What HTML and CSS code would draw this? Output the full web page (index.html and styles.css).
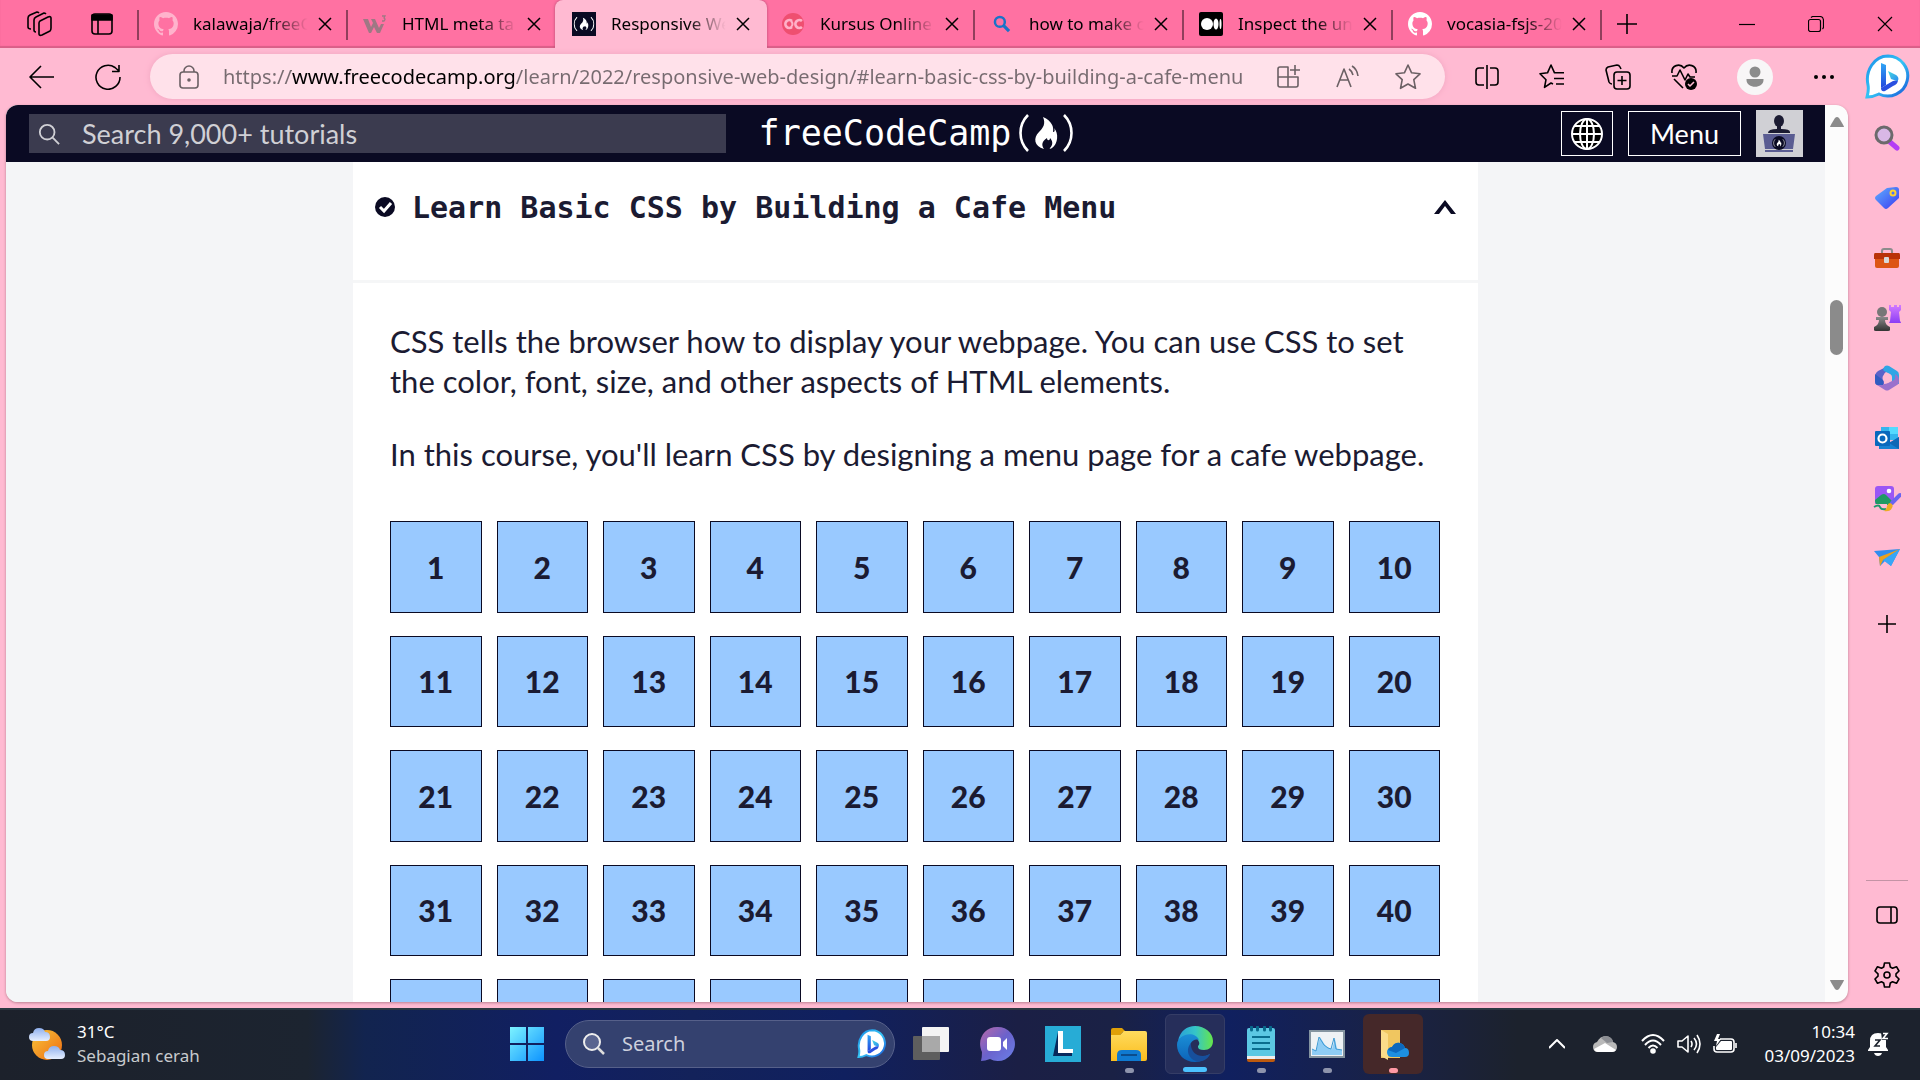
FILE: index.html
```html
<!DOCTYPE html>
<html lang="en">
<head>
<meta charset="utf-8">
<title>Responsive Web Design</title>
<link rel="stylesheet" href="styles.css">
</head>
<body>
<svg class="defs" aria-hidden="true">
  <defs>
    <linearGradient id="bingRing" x1="0" y1="0" x2="1" y2="1"><stop offset="0" stop-color="#1a8fe8"/><stop offset=".5" stop-color="#35c4f5"/><stop offset="1" stop-color="#1756d8"/></linearGradient>
    <linearGradient id="bingB" x1="0" y1="0" x2="0" y2="1"><stop offset="0" stop-color="#2fa6f5"/><stop offset="1" stop-color="#2347dd"/></linearGradient>
    <linearGradient id="bingTip" x1="0" y1="0" x2="1" y2="1"><stop offset="0" stop-color="#46d8e0"/><stop offset="1" stop-color="#2a8df0"/></linearGradient>
    <linearGradient id="tagFill" x1="0" y1="0" x2="1" y2="1"><stop offset="0" stop-color="#5fb0ff"/><stop offset="1" stop-color="#3a3af0"/></linearGradient>
    <linearGradient id="violet" x1="0" y1="0" x2="0" y2="1"><stop offset="0" stop-color="#d27bff"/><stop offset="1" stop-color="#8b3df5"/></linearGradient>
    <linearGradient id="pawn" x1="0" y1="0" x2="0" y2="1"><stop offset="0" stop-color="#8a8a8a"/><stop offset="1" stop-color="#333"/></linearGradient>
    <linearGradient id="win" x1="0" y1="0" x2="1" y2="1"><stop offset="0" stop-color="#7df3ff"/><stop offset="1" stop-color="#0d93ff"/></linearGradient>
    <linearGradient id="sun" x1="0" y1="0" x2="1" y2="1"><stop offset="0" stop-color="#f8c63a"/><stop offset="1" stop-color="#ee6a12"/></linearGradient>
    <linearGradient id="cloud" x1="0" y1="0" x2="0" y2="1"><stop offset="0" stop-color="#8fb0ee"/><stop offset="1" stop-color="#e6efff"/></linearGradient>
    <linearGradient id="teams" x1="0" y1="0" x2="1" y2="1"><stop offset="0" stop-color="#b968a8"/><stop offset=".5" stop-color="#6a62cc"/><stop offset="1" stop-color="#6a80e8"/></linearGradient>
    <linearGradient id="folder" x1="0" y1="0" x2="0" y2="1"><stop offset="0" stop-color="#ffdb5e"/><stop offset="1" stop-color="#fbbd1d"/></linearGradient>
    <linearGradient id="edgeTop" x1="0" y1="0" x2="1" y2="0"><stop offset="0" stop-color="#2a9fd8"/><stop offset=".5" stop-color="#35c5c8"/><stop offset="1" stop-color="#66e64a"/></linearGradient>
    <linearGradient id="edgeLow" x1="0" y1="0" x2="0" y2="1"><stop offset="0" stop-color="#1b8fd6"/><stop offset="1" stop-color="#0c62b8"/></linearGradient>
    <symbol id="close" viewBox="0 0 14 14"><path d="M1 1l12 12M13 1L1 13" fill="none" stroke="currentColor" stroke-width="1.5"/></symbol>
    <symbol id="github" viewBox="0 0 16 16"><path fill="currentColor" d="M8 0C3.58 0 0 3.58 0 8c0 3.54 2.29 6.53 5.47 7.59.4.07.55-.17.55-.38 0-.19-.01-.82-.01-1.49-2.01.37-2.53-.49-2.69-.94-.09-.23-.48-.94-.82-1.13-.28-.15-.68-.52-.01-.53.63-.01 1.08.58 1.23.82.72 1.21 1.87.87 2.33.66.07-.52.28-.87.51-1.07-1.78-.2-3.64-.89-3.64-3.95 0-.87.31-1.59.82-2.15-.08-.2-.36-1.02.08-2.12 0 0 .67-.21 2.2.82.64-.18 1.32-.27 2-.27s1.36.09 2 .27c1.53-1.04 2.2-.82 2.2-.82.44 1.1.16 1.92.08 2.12.51.56.82 1.27.82 2.15 0 3.07-1.87 3.75-3.65 3.95.29.25.54.73.54 1.48 0 1.07-.01 1.93-.01 2.2 0 .21.15.46.55.38A8.01 8.01 0 0 0 16 8c0-4.42-3.58-8-8-8z"/></symbol>
    <symbol id="flame" viewBox="0 0 54 38"><path d="M9 1C-1 11-1 27 9 37M45 1c10 10 10 26 0 36" fill="none" stroke="currentColor" stroke-width="2.6"/><path fill="currentColor" d="M24 3c9 4 11 10 10 15 2 0 2-2 1-4 5 5 4 16-2 20-1 1-3 1-2 0 3-3 3-7 0-10 0 3-3 3-3 0-5 3-6 7-3 11-10-3-11-11-5-17 4-4 7-8 4-15z"/></symbol>
    <symbol id="bing" viewBox="0 0 44 46"><path d="M23 2a20 20 0 1 1-9 38c-4 2-8 3-12 3 1-4 2-7 1-12-3-14 6-29 20-29z" fill="#fff" stroke="url(#bingRing)" stroke-width="3"/><path d="M16 9l5 2v20l-5 3z" fill="url(#bingB)"/><path d="M16 34l5-3 7-4 5-1c0 3-2 5-5 6l-8 5c-3 1-4-1-4-3z" fill="#2a4fe0"/><path d="M23 17l8 4c3 2 3 5 1 6l-6-2z" fill="url(#bingTip)"/></symbol>
    <symbol id="lens" viewBox="0 0 24 24"><circle cx="10" cy="10" r="8" fill="none" stroke="currentColor" stroke-width="2"/><path d="M16 16l7 7" stroke="currentColor" stroke-width="2"/></symbol>
  </defs>
</svg>

<div class="browser">
  <nav class="tabs" aria-label="Tabs">
    <div class="tab-tools">
      <button class="plain" aria-label="Workspaces"><svg width="26" height="26" viewBox="0 0 26 26" class="line"><path d="M12 12q0-1 1-2l8-4q3-1 3 1v10q0 2-1 3l-8 4q-3 1-3-1z"/><path d="M9 21q-2 0-2-2V9q0-2 2-3l8-4q1 0 2 1M4 18q-3 0-3-2V7q0-2 2-3l7-3q1 0 2 1"/></svg></button>
      <button class="plain" aria-label="Tab actions"><svg width="22" height="22" viewBox="0 0 22 22" class="line"><rect x="1" y="1" width="20" height="20" rx="3"/><path d="M1 2h20v5H1z" fill="currentColor"/><path d="M7 6v15"/></svg></button>
    </div>
    <div class="tab divided">
      <svg class="fav faded" width="24" height="24"><use href="#github"/></svg>
      <a href="#" class="tab-name">kalawaja/freeC</a>
      <button class="plain close" aria-label="Close tab"><svg width="14" height="14"><use href="#close"/></svg></button>
    </div>
    <div class="tab divided">
      <svg class="fav" width="24" height="24" viewBox="0 0 24 24"><path d="M0 7h5l3 8 2-4-2-4h4l4 9 2-4h3l-4 9h-3l-3-6-3 6H6z" fill="#9f7884"/><path d="M19 4h3l-1 2q2 1 0 3h-2" fill="none" stroke="#9f7884" stroke-width="1.3"/></svg>
      <a href="#" class="tab-name">HTML meta ta</a>
      <button class="plain close" aria-label="Close tab"><svg width="14" height="14"><use href="#close"/></svg></button>
    </div>
    <div class="tab active">
      <svg class="fav dark" width="24" height="24" viewBox="-4 -10 62 58"><use href="#flame" width="54" height="38"/></svg>
      <a href="#" class="tab-name">Responsive We</a>
      <button class="plain close" aria-label="Close tab"><svg width="14" height="14"><use href="#close"/></svg></button>
    </div>
    <div class="tab">
      <svg class="fav" width="24" height="24" viewBox="0 0 24 24"><circle cx="12" cy="12" r="11" fill="#ef4f70"/><path d="M11 9a4 4 0 1 0 0 6M21 9a4 4 0 1 0 0 6" fill="none" stroke="#ffb0c8" stroke-width="2.6"/><path d="M10 9q3 3 0 6" fill="none" stroke="#ffb0c8" stroke-width="2"/></svg>
      <a href="#" class="tab-name">Kursus Online</a>
      <button class="plain close" aria-label="Close tab"><svg width="14" height="14"><use href="#close"/></svg></button>
    </div>
    <div class="tab divided">
      <svg class="fav blue" width="24" height="24" viewBox="-5 -5 34 34"><circle cx="9" cy="9" r="7" fill="none" stroke="currentColor" stroke-width="3.5"/><path d="M14 14l8 8" stroke="currentColor" stroke-width="4.5"/></svg>
      <a href="#" class="tab-name">how to make c</a>
      <button class="plain close" aria-label="Close tab"><svg width="14" height="14"><use href="#close"/></svg></button>
    </div>
    <div class="tab divided">
      <svg class="fav" width="24" height="24" viewBox="0 0 24 24"><rect width="24" height="24" rx="2"/><circle cx="8" cy="12" r="6" fill="#fff"/><ellipse cx="17" cy="12" rx="2.5" ry="5.5" fill="#fff"/><ellipse cx="21.5" cy="12" rx="1" ry="5" fill="#fff"/></svg>
      <a href="#" class="tab-name">Inspect the un</a>
      <button class="plain close" aria-label="Close tab"><svg width="14" height="14"><use href="#close"/></svg></button>
    </div>
    <div class="tab divided">
      <svg class="fav white" width="24" height="24"><use href="#github"/></svg>
      <a href="#" class="tab-name">vocasia-fsjs-20</a>
      <button class="plain close" aria-label="Close tab"><svg width="14" height="14"><use href="#close"/></svg></button>
    </div>
    <div class="tab-new divided"><button class="plain" aria-label="New tab"><svg width="20" height="20" viewBox="0 0 20 20" class="line"><path d="M10 0v20M0 10h20"/></svg></button></div>
    <div class="window-buttons">
      <button class="plain" aria-label="Minimize"><svg width="16" height="16" viewBox="0 0 16 16" class="line thin"><path d="M0 8.5h16"/></svg></button>
      <button class="plain" aria-label="Restore"><svg width="16" height="16" viewBox="0 0 16 16" class="line thin"><rect x=".5" y="3.5" width="12" height="12" rx="2"/><path d="M3 1.5q1-1 2-1h7q3 0 3.500 3.500v7q0 1-1 2"/></svg></button>
      <button class="plain" aria-label="Close window"><svg width="16" height="16" viewBox="0 0 16 16" class="line thin"><path d="M1 1l14 14M15 1L1 15"/></svg></button>
    </div>
  </nav>

  <div class="toolbar">
    <div class="nav-buttons">
      <button class="plain" aria-label="Back"><svg width="26" height="24" viewBox="0 0 26 24" class="line"><path d="M12 1L1 12l11 11M1 12h24"/></svg></button>
      <button class="plain" aria-label="Refresh"><svg width="26" height="26" viewBox="0 0 26 26" class="line"><path d="M25 13A12 12 0 1 1 20 3.500L24 7M24 1v6.500h-7"/></svg></button>
    </div>
    <form class="address">
      <svg width="20" height="24" viewBox="0 0 20 24" class="line"><rect x="1" y="7" width="18" height="16" rx="3"/><path d="M5 7V6a5 5 0 0 1 10 0v1"/><circle cx="10" cy="15" r="1" fill="currentColor"/></svg>
      <input type="text" class="url" aria-label="Address" value="https://www.freecodecamp.org/learn/2022/responsive-web-design/#learn-basic-css-by-building-a-cafe-menu">
      <div class="address-tools">
        <button type="button" class="plain" aria-label="Apps"><svg width="24" height="24" viewBox="0 0 24 24" class="line"><path d="M11 12H1V4q0-2 2-2h8v20H3q-2 0-2-2v-8M11 12h10v8q0 2-2 2h-8M18 0v10M13 5h10"/></svg></button>
        <button type="button" class="plain" aria-label="Read aloud"><svg width="24" height="24" viewBox="0 0 24 24" class="line"><path d="M1 22L8 4l7 18M4 15h8M13 4q3 2 4 6M16 1q5 3 6 10"/></svg></button>
        <button type="button" class="plain" aria-label="Add to favorites"><svg width="26" height="26" viewBox="0 0 26 26" class="line"><path d="M13 1l3.600 7.800 8.400 1-6.200 5.900 1.700 8.600L13 20l-7.500 4.300 1.700-8.600L1 9.800l8.400-1z"/></svg></button>
      </div>
    </form>
    <div class="toolbar-tools">
      <button class="plain" aria-label="Split screen"><svg width="24" height="26" viewBox="0 0 24 26" class="line"><path d="M9 4H4Q1 4 1 7v11q0 3 3 3h5M15 4h5q3 0 3 3v11q0 3-3 3h-5M12 1v24"/></svg></button>
      <button class="plain" aria-label="Favorites"><svg width="26" height="26" viewBox="0 0 26 26" class="line"><path d="M14 20l-2-1-6.500 4.300L7 15.700 1 9.800l7.500-1L12 1l3.500 7.800H25M15 14.500h10M17 20h8"/></svg></button>
      <button class="plain" aria-label="Collections"><svg width="26" height="26" viewBox="0 0 26 26" class="line"><rect x="9" y="8" width="16" height="17" rx="3"/><path d="M17 12v9M12.500 16.500h9M7 20q-2 0-3-2L1 6q0-2 2-3l9-2q2 0 3 2l1 2"/></svg></button>
      <button class="plain" aria-label="Browser essentials"><svg width="26" height="26" viewBox="0 0 26 26" class="line"><path d="M1 9C0 1 9-1 13 4c4-5 13-3 12 5M3 15l9 9M1 12h5l3-6 5 10 3-6 2 3h5"/><circle cx="20" cy="20" r="6" fill="#000" stroke="none"/><path d="M17 20l2 2 4-4" stroke="#ffbad2"/></svg></button>
      <button class="plain" aria-label="Profile"><svg width="36" height="36" viewBox="0 0 36 36"><circle cx="18" cy="18" r="18" fill="#f8f6f7"/><circle cx="18" cy="13" r="5.500" fill="#8c8c8c"/><path d="M9.500 20h17v1c0 9-17 9-17 0z" fill="#8c8c8c"/></svg></button>
      <button class="plain" aria-label="Settings and more"><svg width="22" height="6" viewBox="0 0 22 6"><circle cx="3" cy="3" r="2"/><circle cx="11" cy="3" r="2"/><circle cx="19" cy="3" r="2"/></svg></button>
    </div>
    <button class="plain bing-button" aria-label="Bing chat"><svg width="46" height="46"><use href="#bing"/></svg></button>
  </div>

  <div class="workspace">
    <div class="page">
      <div class="page-body">
        <header class="site-header">
          <form class="site-search">
            <svg width="22" height="22"><use href="#lens"/></svg>
            <input type="search" placeholder="Search 9,000+ tutorials" aria-label="Search tutorials">
          </form>
          <a href="#" class="logo">freeCodeCamp<svg width="54" height="38"><use href="#flame"/></svg></a>
          <div class="site-actions">
            <button class="outlined globe" aria-label="Language"><svg width="32" height="32" viewBox="0 0 32 32" fill="none" stroke="#fff" stroke-width="2"><circle cx="16" cy="16" r="15" fill="#000"/><ellipse cx="16" cy="16" rx="7" ry="15"/><path d="M16 1v30M1 16h30M4 8h24M4 24h24"/></svg></button>
            <button class="outlined">Menu</button>
            <a href="#" class="avatar" aria-label="Profile"><svg width="47" height="47" viewBox="0 0 47 47"><path fill="#d0d0d5" d="M0 0h47v47H0z"/><ellipse cx="23" cy="11" rx="5" ry="6" fill="#1b1b32"/><path d="M21 15h4v4q10 0 9 4H12q0-4 9-4z" fill="#1b1b32"/><path fill="#5a5c92" d="M7 24h32l-2 15H9zM9 40h28v2H9z"/><circle cx="23" cy="33" r="7" fill="#0a0a23"/><svg x="17" y="29" width="12" height="8" color="#fff"><use href="#flame"/></svg></svg></a>
          </div>
        </header>
        <main class="course">
          <button class="course-title">
            <svg width="20" height="20" viewBox="0 0 20 20"><circle cx="10" cy="10" r="10" fill="#0a0a23"/><path d="M5 10l4 4 7-8" fill="none" stroke="#fff" stroke-width="3"/></svg>
            <span>Learn Basic CSS by Building a Cafe Menu</span>
            <svg width="22" height="14" viewBox="0 0 22 14"><path d="M0 14L11 0l11 14h-5L11 6l-6 8z" fill="#0a0a23"/></svg>
          </button>
          <section class="course-body">
            <p>CSS tells the browser how to display your webpage. You can use CSS to set the color, font, size, and other aspects of HTML elements.</p>
            <p>In this course, you'll learn CSS by designing a menu page for a cafe webpage.</p>
            <div class="steps">
              <a href="#">1</a><a href="#">2</a><a href="#">3</a><a href="#">4</a><a href="#">5</a><a href="#">6</a><a href="#">7</a><a href="#">8</a><a href="#">9</a><a href="#">10</a>
              <a href="#">11</a><a href="#">12</a><a href="#">13</a><a href="#">14</a><a href="#">15</a><a href="#">16</a><a href="#">17</a><a href="#">18</a><a href="#">19</a><a href="#">20</a>
              <a href="#">21</a><a href="#">22</a><a href="#">23</a><a href="#">24</a><a href="#">25</a><a href="#">26</a><a href="#">27</a><a href="#">28</a><a href="#">29</a><a href="#">30</a>
              <a href="#">31</a><a href="#">32</a><a href="#">33</a><a href="#">34</a><a href="#">35</a><a href="#">36</a><a href="#">37</a><a href="#">38</a><a href="#">39</a><a href="#">40</a>
              <a href="#" aria-label="Step 41"></a><a href="#" aria-label="Step 42"></a><a href="#" aria-label="Step 43"></a><a href="#" aria-label="Step 44"></a><a href="#" aria-label="Step 45"></a><a href="#" aria-label="Step 46"></a><a href="#" aria-label="Step 47"></a><a href="#" aria-label="Step 48"></a><a href="#" aria-label="Step 49"></a><a href="#" aria-label="Step 50"></a>
            </div>
          </section>
        </main>
      </div>
      <div class="scrollbar" aria-hidden="true">
        <svg width="14" height="10" viewBox="0 0 14 10"><path d="M0 10q0-1 5-9 2-2 4 0 5 8 5 9z" fill="#8b8b8b"/></svg>
        <div class="track"><div class="thumb"></div></div>
        <svg width="14" height="10" viewBox="0 0 14 10"><path d="M0 0q0 1 5 9 2 2 4 0 5-8 5-9z" fill="#8b8b8b"/></svg>
      </div>
    </div>

    <aside class="sidebar">
      <button class="plain" aria-label="Search"><svg width="26" height="26" viewBox="0 0 26 26"><path d="M16 17l7 6" stroke="#b43cf5" stroke-width="5" stroke-linecap="round"/><circle cx="10" cy="10" r="8" fill="#d9b8e6" stroke="#6c6a6c" stroke-width="3"/></svg></button>
      <button class="plain" aria-label="Shopping"><svg width="26" height="26" viewBox="0 0 26 26"><path d="M13 3l9-1q3 0 3 3v8L14 23q-2 2-4 0l-8-8q-2-2 0-4z" fill="url(#tagFill)"/><circle cx="19" cy="8" r="2.500" fill="none" stroke="#ffd12e" stroke-width="2"/></svg></button>
      <button class="plain" aria-label="Tools"><svg width="28" height="26" viewBox="0 0 28 26"><path d="M9 8V6q0-2 2-2h6q2 0 2 2v2" fill="none" stroke="#8c8c8c" stroke-width="2"/><path d="M2 10h24v11q0 2-2 2H4q-2 0-2-2z" fill="#dd5514"/><path d="M2 8h24q1 0 1 2v4H1v-4q0-2 1-2z" fill="#b93208"/><rect x="11" y="12" width="5" height="6" rx="1" fill="#d8d8d8"/></svg></button>
      <button class="plain" aria-label="Games"><svg width="28" height="28" viewBox="0 0 28 28"><path d="M16 1h2v2h3V1h3v2h2V1h2v5l-2 2 1 9q1 1 1 2H16l1-2 1-9-2-2z" fill="url(#violet)"/><circle cx="9" cy="8" r="5" fill="#777"/><path d="M3 13h12v3h-3q0 5 5 7v3q0 1-2 1H3q-2 0-2-1v-3q5-2 5-7H3z" fill="url(#pawn)"/></svg></button>
      <button class="plain" aria-label="Microsoft 365"><svg width="26" height="26" viewBox="0 0 26 26"><path d="M14 1L4 6Q1 8 1 11v6q0 2 2 3l7 2V10q0-2 2-3l6-3z" fill="#5a63c8"/><path d="M11 1q2-1 4 0l8 5q2 1 2 4v9l-7-1v-6q0-2-2-3l-6-3q-2-2 1-5z" fill="#2fa5e5"/><path d="M25 16q0 3-2 4l-8 5q-2 1-4 0l-8-5 7-1q2 0 4-1l6-3q2-1 1-6 4 2 4 7z" fill="#9a70cc"/><path d="M3 20q-2-1-2-4V9l8 6v5z" fill="#315cc0"/><circle cx="13" cy="13" r="4.500" fill="#ffbad2"/></svg></button>
      <button class="plain" aria-label="Outlook"><svg width="26" height="26" viewBox="0 0 26 26"><path d="M7 2h17v13H7z" fill="#34b5ee"/><path d="M15 2h9v7h-9z" fill="#54daff"/><path d="M5 24V14h3l9 3 8-5v12z" fill="#1681d2"/><path d="M25 12v12L15 18z" fill="#1067b5"/><rect x="1" y="6" width="15" height="15" rx="1" fill="#0869bd"/><circle cx="8.500" cy="13.500" r="4" fill="none" stroke="#fff" stroke-width="2.200"/></svg></button>
      <button class="plain" aria-label="Image creator"><svg width="28" height="28" viewBox="0 0 28 28"><rect x="2" y="2" width="19" height="19" rx="3" fill="#9a56f5"/><circle cx="16" cy="7" r="2.300" fill="#fff"/><path d="M2 16l6-5q3-2 5 0l6 6q-1 4-4 4H5q-3 0-3-5z" fill="#1f9a63"/><path d="M0 20h14v8H0z" fill="#ffbad2"/><path d="M1 23q5-3 6 0t6 2" fill="none" stroke="#1c9a6c" stroke-width="2"/><path d="M19 19l8-8" stroke="#6a64f0" stroke-width="4" stroke-linecap="round"/><path d="M17 19q4 1 2 5-2 4-8 3 3-2 3-5 1-3 3-3z" fill="#ecab22"/></svg></button>
      <button class="plain" aria-label="Drop"><svg width="28" height="20" viewBox="0 0 28 20"><path d="M1 3L27 1 18 18l-6-5-5 5-1-9z" fill="#2f8df0"/><path d="M27 1L6 9l1 9 3-6z" fill="#eaa11e"/><path d="M27 1L10 12l8 6z" fill="#38a6f6"/></svg></button>
      <div class="sidebar-add"><button class="plain" aria-label="Customize sidebar"><svg width="18" height="18" viewBox="0 0 18 18" class="line"><path d="M9 0v18M0 9h18"/></svg></button></div>
      <div class="sidebar-end">
        <button class="plain" aria-label="Hide sidebar"><svg width="22" height="18" viewBox="0 0 22 18" class="line"><rect x="1" y="1" width="20" height="16" rx="3"/><path d="M15 1v16"/></svg></button>
        <button class="plain" aria-label="Settings"><svg width="26" height="26" viewBox="0 0 26 26" class="line"><path d="M10.500 1h5l.8 4 2.200 1.200 4-1.500 2.500 4.300L22 11.800v2.400l3 2.800-2.500 4.300-4-1.500-2.200 1.200-.8 4h-5l-.8-4-2.200-1.200-4 1.500L1 17l3-2.800v-2.400L1 9l2.500-4.300 4 1.500L9.700 5z"/><circle cx="13" cy="13" r="3"/></svg></button>
      </div>
    </aside>
  </div>
</div>

<footer class="taskbar">
  <a href="#" class="weather">
    <svg width="36" height="36" viewBox="0 0 36 36"><circle cx="18" cy="19" r="15" fill="url(#sun)"/><path d="M4 15q-4 0-4-4t4-4q1-5 6-5t6 4q5 0 5 5 0 4-4 4z" fill="url(#cloud)"/><path d="M19 33q-4 0-4-4t4-4q1-5 6-5t6 4q5 0 5 5 0 4-4 4z" fill="url(#cloud)"/></svg>
    <span>31°C<br><small>Sebagian cerah</small></span>
  </a>
  <div class="apps">
    <button class="app" aria-label="Start"><svg width="36" height="36" viewBox="0 0 36 36"><path d="M1 1h16v16H1zM19 1h16v16H19zM1 19h16v16H1zM19 19h16v16H19z" fill="url(#win)"/></svg></button>
    <form class="task-search">
      <svg width="22" height="22" viewBox="0 0 22 22"><circle cx="9" cy="9" r="8" fill="#59648f" stroke="#eee" stroke-width="2"/><path d="M15 15l6 6" stroke="#ddd" stroke-width="2.500"/></svg>
      <input type="search" placeholder="Search" aria-label="Search Windows">
      <svg width="29" height="30"><use href="#bing"/></svg>
    </form>
    <button class="app" aria-label="Task view"><svg width="36" height="36" viewBox="0 0 36 36"><rect x="9" y="1" width="27" height="25" rx="1" fill="#f4f4f4"/><rect y="10" width="27" height="24" rx="1" fill="#5e5e5e"/><path d="M9 10h18v16H9z" fill="#a9a9a9"/></svg></button>
    <button class="app" aria-label="Chat"><svg width="36" height="36" viewBox="0 0 36 36"><path d="M18 1a17 17 0 1 1-7 32q-5 2-9 2 1-4 1-9C-3 13 6 1 18 1z" fill="url(#teams)"/><rect x="8" y="11" width="14" height="14" rx="3" fill="#fff"/><path d="M24 16l4-4v12l-4-4z" fill="#fff"/></svg></button>
    <button class="app" aria-label="Lightshot"><svg width="36" height="36" viewBox="0 0 36 36"><path d="M0 0h36v36H0z" fill="#27acd6"/><path d="M13 6L8 30h19v-3H14z" fill="#08295c"/><path d="M13 5h5v18h10v4H13z" fill="#fff"/></svg></button>
    <button class="app open" aria-label="File Explorer"><svg width="36" height="36" viewBox="0 0 36 36"><path d="M0 4q0-2 2-2h9l4 4h-3l-3 3H0z" fill="#e0a008"/><path d="M0 9h9l4-4h21q2 0 2 2v26q0 2-2 2H0z" fill="url(#folder)"/><path d="M6 35v-6q0-5 5-5h14q5 0 5 5v6z" fill="#0f7ad1"/><path d="M10 29h16" stroke="#0b4c8c" stroke-width="2"/></svg></button>
    <button class="app open current" aria-label="Microsoft Edge"><svg width="36" height="36" viewBox="0 0 36 36"><path d="M1 15C3 5 10 0 18 0c10 0 18 7 18 15 0 6-4 9-9 9-4 0-6-1-6-3s2-2 1-5c-3-9-17-8-21-1z" fill="url(#edgeTop)"/><path d="M0 19C0 8 18 4 22 14c-6-2-11 4-8 10 3 7 11 9 19 4-3 5-9 8-15 8C7 36 0 28 0 19z" fill="url(#edgeLow)"/><path d="M14 17c-8 9 1 21 11 18 4-1 7-4 8-7-9 5-20 0-19-11z" fill="#174f9c"/></svg></button>
    <button class="app open" aria-label="Notepad"><svg width="28" height="36" viewBox="0 0 28 36"><rect y="2" width="28" height="32" rx="2" fill="#5cc8e3"/><path d="M0 30h28v4H0z" fill="#eee"/><path d="M0 33h28v1q0 2-2 2H2q-2 0-2-2z" fill="#bd5a0e"/><path d="M5 11h18M5 17h18M5 23h18" stroke="#0a6d8e" stroke-width="2"/><path d="M4.500 1v3M10.500 1v3M17.500 1v3M23.500 1v3" stroke="#08688a" stroke-width="3" stroke-linecap="round"/></svg></button>
    <button class="app open" aria-label="Task Manager"><svg width="36" height="28" viewBox="0 0 36 28"><rect x="1" y="1" width="34" height="26" fill="#eef2f5" stroke="#8494a0" stroke-width="2"/><path d="M3 25v-6l4 2 4-14 5 8 4 3 3 1 3-10 2 10 5 1v5z" fill="#8fcdf5"/><path d="M3 19l4 2 3-14 5 8 4 3 3 1 3-11 2 11 6 1" fill="none" stroke="#3d9ad4"/></svg></button>
    <button class="app open alert" aria-label="OneDrive"><svg width="36" height="36" viewBox="0 0 36 36"><path d="M6 4h19v28H6z" fill="#f0c660"/><path d="M6 4l7 4v26l-7-4z" fill="#fbdc8a"/><path d="M17 31q-5 0-5-5 0-4 5-5 3-5 8-4 4 1 5 5 4 0 4 5 0 4-4 4z" fill="#1d8fe0"/><path d="M13 24q1-3 4-3 3-5 8-4 4 1 5 5l-9 5z" fill="#0c68bd"/></svg></button>
  </div>
  <div class="tray">
    <button class="plain" aria-label="Hidden icons"><svg width="16" height="10" viewBox="0 0 16 10" class="line"><path d="M0 9l8-8 8 8" stroke-width="2"/></svg></button>
    <svg class="drive" width="24" height="16" viewBox="0 0 24 16"><path d="M5 16q-5 0-5-5 0-4 4-5Q7 0 13 0q6 1 7 6 4 1 4 5t-4 5z" fill="#b9b9b9"/><path d="M1 13l11-6 11 7q-1 2-4 2H5q-3 0-4-3z" fill="#fff"/><path d="M8 2q5-4 10 0 2 2 2 4l-6 1z" fill="#8b8d92"/></svg>
    <button class="plain system" aria-label="Network, sound and battery">
      <svg width="24" height="20" viewBox="0 0 24 20" class="line"><path d="M1 7Q12-5 23 7M4 11q8-9 16 0M7.500 14q4.500-5 9 0" stroke-width="2"/><circle cx="12" cy="17" r="2" fill="#fff"/></svg>
      <svg width="24" height="20" viewBox="0 0 24 20" class="line"><path d="M1 7h4l6-5v16l-6-5H1zM14 7q2 3 0 6M17 4q5 6 0 12M20 1q6 9 0 18" stroke-width="1.600"/></svg>
      <svg width="24" height="20" viewBox="0 0 24 20" class="line"><path d="M7 5h11q3 0 3 3v7q0 3-3 3H4q-3 0-3-3v-3M23 9v5"/><path d="M8 7h10q1 0 1 1v7q0 1-1 1H4q-1 0-1-1v-2z" fill="#fff" stroke="none"/><path d="M4 0L1 7h3l-1 5 5-7H5l2-5z" fill="#fff" stroke="none"/></svg>
    </button>
    <time class="clock">10:34<br>03/09/2023</time>
    <button class="plain" aria-label="Notifications"><svg width="21" height="24" viewBox="0 0 21 24"><path d="M0 19v-1l2-3V9q0-8 8-8 8 0 8 8v6l2 3v1z" fill="#fff"/><path d="M6 21h8q-1 3-4 3t-4-3z" fill="#fff"/><path d="M7 8h5l-5 6h5" fill="none" stroke="#1c222d" stroke-width="1.600"/><path d="M13 0h8v8h-7z" fill="#1c222d"/><path d="M15 1.500h4l-4 5h5" fill="none" stroke="#fff" stroke-width="1.600"/></svg></button>
  </div>
</footer>
</body>
</html>
```
FILE: styles.css
```css
* { box-sizing: border-box; }

body {
  margin: 0;
  height: 100vh;
  display: flex;
  flex-direction: column;
  overflow: hidden;
  background: #ffbad2;
  color: #000;
  font-family: "Noto Sans", "Open Sans", sans-serif;
}

a { color: inherit; text-decoration: none; }
svg { display: block; flex: none; }
.defs { position: absolute; width: 0; height: 0; }
button, input { font: inherit; color: inherit; }
input { border: 0; background: none; padding: 0; min-width: 0; outline: 0; }

.plain {
  display: flex;
  align-items: center;
  justify-content: center;
  border: 0;
  padding: 0;
  background: none;
}

.line { fill: none; stroke: currentColor; stroke-width: 1.6; stroke-linejoin: round; }
.line.thin { stroke-width: 1.2; }

/* Browser window */
.browser { flex: 1; min-height: 0; display: flex; flex-direction: column; }

.tabs {
  display: flex;
  height: 48px;
  flex: none;
  background: #ff71a2;
  box-shadow: inset 0 -2px 1px #d95f88;
}
.tab-tools { display: flex; align-items: center; gap: 38px; width: 137px; padding-left: 27px; }
.tab {
  display: flex;
  align-items: center;
  width: 209px;
  padding: 0 14px 0 17px;
  font-size: 17px;
}
.tab.active {
  width: 212px;
  margin-right: -3px;
  padding-right: 17px;
  background: #ffbad2;
  border-radius: 8px 8px 0 0;
  box-shadow: 0 0 3px #b04a70;
  clip-path: inset(0 -4px 0 -4px);
}
.divided { background: linear-gradient(#903f5c, #903f5c) 0 10px / 2px 30px no-repeat; }
.tab-name {
  flex: 1;
  min-width: 0;
  margin: 0 8px 2px 15px;
  overflow: hidden;
  white-space: nowrap;
  mask-image: linear-gradient(90deg, #000 65%, transparent 98%);
}
.fav.faded { color: #ffb3cc; }
.fav.dark { color: #fff; background: #0a0a23; }
.fav.white { color: #fff; }
.fav.blue { color: #1a73c8; }
.tab-new { display: flex; padding-left: 17px; }
.window-buttons { display: flex; gap: 53px; margin-left: auto; padding-right: 27px; }

.toolbar { display: flex; align-items: center; height: 57px; flex: none; }
.nav-buttons { display: flex; gap: 40px; width: 150px; padding-left: 29px; }
.address {
  flex: 1;
  display: flex;
  align-items: center;
  height: 45px;
  padding: 0 24px 0 29px;
  border-radius: 23px;
  background: #ffe1ea;
  box-shadow: 0 0 6px #f0a6c0;
  color: #6b6064;
}
.url {
  flex: 1;
  margin-left: 24px;
  font-size: 20px;
  background: linear-gradient(90deg, #776b70 68px, #000 68px 292px, #776b70 292px);
  background-clip: text;
  color: transparent;
}
.address-tools { display: flex; gap: 35px; }
.toolbar-tools { display: flex; align-items: center; gap: 40px; padding: 0 29px 0 30px; }
.bing-button { width: 46px; margin-right: 10px; }

.workspace { flex: 1; min-height: 0; display: flex; padding-left: 6px; }
.page {
  flex: 1;
  display: flex;
  margin-bottom: 6px;
  overflow: hidden;
  border-radius: 12px;
  background: #fcfcfc;
  box-shadow: 0 1px 3px #b98090;
}
.page-body { flex: 1; overflow: hidden; background: #f4f5f7; }

/* freeCodeCamp header */
.site-header {
  display: grid;
  grid-template-columns: minmax(0, 1fr) auto minmax(0, 1fr);
  align-items: center;
  height: 57px;
  padding: 0 22px 0 23px;
  background: #0a0a23;
  color: #fff;
  font-family: Lato, sans-serif;
  font-size: 27px;
}
.site-search {
  display: flex;
  align-items: center;
  gap: 22px;
  height: 39px;
  margin-right: 33px;
  padding: 0 9px;
  background: #3b3b4f;
  color: #d0d0d5;
}
.site-search input { flex: 1; }
.site-search input::placeholder { color: #d0d0d5; opacity: 1; }
.logo {
  display: flex;
  align-items: center;
  gap: 8px;
  padding-bottom: 2px;
  font-family: "DejaVu Sans Mono", monospace;
  font-size: 35px;
  line-height: 40px;
}
.site-actions { display: flex; align-items: center; justify-content: flex-end; gap: 15px; }
.outlined {
  height: 45px;
  padding: 0 21px;
  border: 1px solid #fff;
  background: #0a0a23;
}
.globe { padding: 0 9px; }

/* Course block */
.course { max-width: 1125px; margin: 0 auto; background: #fff; color: #1b1b32; }
.course-title {
  display: flex;
  align-items: flex-start;
  width: 100%;
  height: 121px;
  padding: 26px 22px 0 22px;
  border: 0;
  border-bottom: 3px solid #f5f6f7;
  background: none;
  font-family: "DejaVu Sans Mono", monospace;
  font-size: 30px;
  font-weight: 700;
  line-height: 40px;
  text-align: left;
}
.course-title span { flex: 1; margin-left: 17px; }
.course-title svg { margin-top: 9px; }
.course-title svg:last-child { margin-top: 12px; }
.course-body {
  padding: 38px 38px 0 37px;
  font-family: Lato, sans-serif;
  font-size: 31px;
  line-height: 40px;
}
.course-body p { margin: 0 0 33px; }
.steps { display: grid; grid-template-columns: repeat(10, 1fr); gap: 23px 15px; padding-top: 14px; }
.steps a {
  display: flex;
  align-items: center;
  justify-content: center;
  aspect-ratio: 1;
  border: 1px solid #0a0a23;
  background: #99c9ff;
  font-size: 30px;
  font-weight: 900;
}

.scrollbar {
  display: flex;
  flex-direction: column;
  align-items: center;
  width: 23px;
  padding: 12px 0;
}
.track { flex: 1; padding-top: 173px; }
.thumb { width: 13px; height: 55px; border-radius: 7px; background: #8b8b8b; }

.sidebar {
  display: flex;
  flex-direction: column;
  align-items: center;
  width: 72px;
  padding: 3px 0 3px 6px;
}
.sidebar .plain { height: 60px; }
.sidebar-add { padding-top: 6px; }
.sidebar-end {
  width: 42px;
  margin-top: auto;
  padding-top: 4px;
  border-top: 1px solid #c493a5;
}
.sidebar-end .plain { width: 42px; }

/* Taskbar */
.taskbar {
  display: grid;
  grid-template-columns: 1fr auto 1fr;
  height: 72px;
  flex: none;
  padding-bottom: 2px;
  border-top: 2px solid #2c3842;
  background: linear-gradient(90deg, #1c212b 0, #1c2430 16%, #12244f 19%, #111f62 29%, #13225a 36%, #10205f 44%, #1b1f45 53%, #1a2145 58%, #10205f 64%, #1a2244 73%, #1c222d 79%);
  color: #fff;
  font-size: 17px;
  line-height: 24px;
}
.weather { display: flex; align-items: center; gap: 12px; padding-left: 29px; }
.weather small { font-size: 17px; color: #c8cacd; }
.apps { display: flex; align-items: center; gap: 6px; }
.app {
  position: relative;
  display: flex;
  align-items: center;
  justify-content: center;
  width: 60px;
  height: 60px;
  padding: 0;
  border: 0;
  border-radius: 6px;
  background: none;
}
.task-search {
  display: flex;
  align-items: center;
  gap: 17px;
  width: 330px;
  height: 48px;
  margin-left: 2px;
  padding: 0 8px 0 17px;
  border: 1px solid #56608a;
  border-radius: 24px;
  background: #34416f;
  font-size: 20px;
}
.task-search input { flex: 1; }
.task-search input::placeholder { color: #cdd0dd; opacity: 1; }
.open::after {
  content: "";
  position: absolute;
  bottom: 1px;
  left: 26px;
  width: 9px;
  height: 5px;
  border-radius: 3px;
  background: #8e94ac;
}
.current { background: #262e5a; border: 1px solid #353d66; }
.current::after { left: 17px; width: 24px; background: #4cc2ff; }
.alert { background: #452829; }
.alert::after { background: #ff99a4; }
.tray { display: flex; align-items: center; justify-content: flex-end; padding-right: 31px; }
.drive { margin: 0 24px 0 28px; }
.system { gap: 12px; }
.clock { margin: 0 13px 0 28px; text-align: right; }
```
